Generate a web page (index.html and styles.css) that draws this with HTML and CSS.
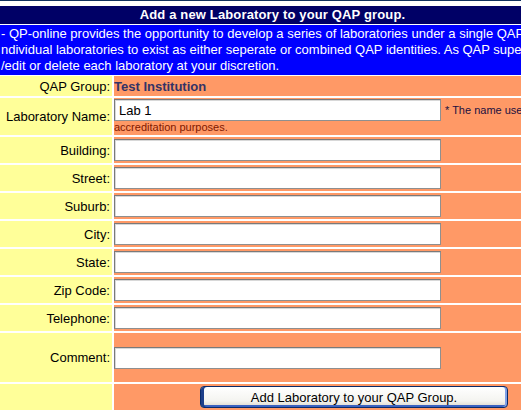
FILE: index.html
```html
<!DOCTYPE html>
<html>
<head>
<meta charset="utf-8">
<link rel="stylesheet" href="styles.css">
</head>
<body>
<div class="topline"></div>
<div class="page">
  <div class="title">Add a new Laboratory to your QAP group.</div>
  <div class="desc">- QP-online provides the opportunity to develop a series of laboratories under a single QAP group, allowing<br>ndividual laboratories to exist as either seperate or combined QAP identities. As QAP supervisor you may<br>/edit or delete each laboratory at your discretion.</div>
  <div class="form">
    <div class="lbl">QAP Group:</div>
    <div class="val"><span class="inst">Test Institution</span></div>

    <div class="lbl">Laboratory Name:</div>
    <div class="val name"><input class="field" type="text" value="Lab 1"><span class="note">* The name used for reporting and</span><br><span class="note2">accreditation purposes.</span></div>

    <div class="lbl">Building:</div>
    <div class="val"><input class="field" type="text"></div>

    <div class="lbl">Street:</div>
    <div class="val"><input class="field" type="text"></div>

    <div class="lbl">Suburb:</div>
    <div class="val"><input class="field" type="text"></div>

    <div class="lbl">City:</div>
    <div class="val"><input class="field" type="text"></div>

    <div class="lbl">State:</div>
    <div class="val"><input class="field" type="text"></div>

    <div class="lbl">Zip Code:</div>
    <div class="val"><input class="field" type="text"></div>

    <div class="lbl">Telephone:</div>
    <div class="val"><input class="field" type="text"></div>

    <div class="lbl">Comment:</div>
    <div class="val"><input class="field" type="text"></div>

    <div class="lbl"></div>
    <div class="val"><button class="submit" type="button">Add Laboratory to your QAP Group.</button></div>
  </div>
</div>
</body>
</html>
```
FILE: styles.css
```css
html, body {
  margin: 0;
  padding: 0;
  overflow: hidden;
  background: #ffffff;
}
body {
  font-family: "Liberation Sans", Arial, sans-serif;
  font-size: 13px;
  color: #000000;
}
.topline {
  width: 545px;
  height: 1px;
  background: #10305e;
  margin-bottom: 5px;
}
.page {
  width: 545px;
}
.title {
  background: #000066;
  color: #ffffff;
  font-weight: bold;
  letter-spacing: 0.15px;
  text-align: center;
  height: 18px;
  line-height: 18px;
}
.desc {
  margin-top: 1px;
  background: #0000ff;
  color: #ffffff;
  white-space: nowrap;
  overflow: hidden;
  line-height: 16px;
  height: 48px;
  padding: 1px 0 1px 1px;
}
.form {
  margin-top: 1px;
  display: grid;
  grid-template-columns: 112px 1fr;
  grid-template-rows: 20px 37px repeat(7, 26px) 49px 26px;
  gap: 2px;
}
.lbl {
  background: #ffff99;
  display: flex;
  align-items: center;
  justify-content: flex-end;
  padding-right: 2px;
  white-space: nowrap;
}
.val {
  background: #ff9966;
  display: flex;
  align-items: center;
  overflow: hidden;
}
.inst {
  font-weight: bold;
  color: #333366;
}
.field {
  box-sizing: border-box;
  width: 327px;
  height: 22px;
  margin: 0;
  padding: 1px 4px;
  border: 1px solid #8f8f8f;
  border-top-color: #7a7a7a;
  border-left-color: #7a7a7a;
  box-shadow: inset 1px 1px 0 #d8d8d8;
  background: #ffffff;
  font-family: "Liberation Sans", Arial, sans-serif;
  font-size: 13px;
  color: #000000;
}
.name {
  display: block;
  padding-top: 1px;
  font-size: 11px;
  line-height: 12px;
  white-space: nowrap;
}
.name .field {
  vertical-align: middle;
}
.note {
  margin-left: 4px;
  color: #1a1040;
  vertical-align: middle;
}
.note2 {
  color: #801800;
}
.submit {
  box-sizing: border-box;
  margin-left: 86px;
  width: 308px;
  height: 22px;
  padding: 0;
  border: 1px solid #0a2a6a;
  border-radius: 4px;
  background: linear-gradient(#ffffff, #f4f4f0 70%, #dcd8cc);
  box-shadow: inset 3px 0 0 #1d3f8a, inset -2px 0 0 #7fa0e6, inset 0 -2px 0 #3a62c0;
  font-family: "Liberation Sans", Arial, sans-serif;
  font-size: 13px;
  color: #000000;
}
```
